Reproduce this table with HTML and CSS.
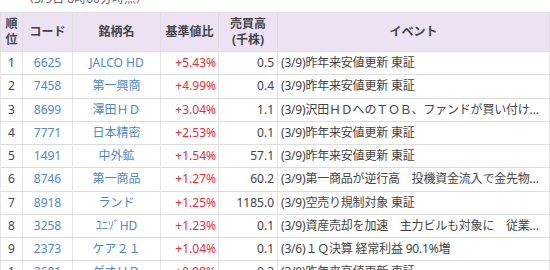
FILE: index.html
```html
<!DOCTYPE html>
<html lang="ja">
<head>
<meta charset="utf-8">
<link rel="stylesheet" href="styles.css">
</head>
<body>
<div class="wrap">
  <p class="note">（3/9日 8時00分時点）</p>
  <table class="rank">
    <colgroup>
      <col class="c-rank"><col class="c-code"><col class="c-name"><col class="c-pct"><col class="c-vol"><col class="c-ev">
    </colgroup>
    <thead>
      <tr>
        <th>順<br>位</th>
        <th>コード</th>
        <th>銘柄名</th>
        <th>基準値比</th>
        <th>売買高<br>(千株)</th>
        <th>イベント</th>
      </tr>
    </thead>
    <tbody>
      <tr><td class="r">1</td><td class="code">6625</td><td class="name">JALCO HD</td><td class="pct">+5.43%</td><td class="vol">0.5</td><td class="ev">(3/9)昨年来安値更新 東証</td></tr>
      <tr><td class="r">2</td><td class="code">7458</td><td class="name">第一興商</td><td class="pct">+4.99%</td><td class="vol">0.4</td><td class="ev">(3/9)昨年来安値更新 東証</td></tr>
      <tr><td class="r">3</td><td class="code">8699</td><td class="name">澤田ＨＤ</td><td class="pct">+3.04%</td><td class="vol">1.1</td><td class="ev">(3/9)沢田ＨＤへのＴＯＢ、ファンドが買い付け期間延長へ</td></tr>
      <tr><td class="r">4</td><td class="code">7771</td><td class="name">日本精密</td><td class="pct">+2.53%</td><td class="vol">0.1</td><td class="ev">(3/9)昨年来安値更新 東証</td></tr>
      <tr><td class="r">5</td><td class="code">1491</td><td class="name">中外鉱</td><td class="pct">+1.54%</td><td class="vol">57.1</td><td class="ev">(3/9)昨年来安値更新 東証</td></tr>
      <tr><td class="r">6</td><td class="code">8746</td><td class="name">第一商品</td><td class="pct">+1.27%</td><td class="vol">60.2</td><td class="ev">(3/9)第一商品が逆行高　投機資金流入で金先物の上昇期待</td></tr>
      <tr><td class="r">7</td><td class="code">8918</td><td class="name">ランド</td><td class="pct">+1.25%</td><td class="vol">1185.0</td><td class="ev">(3/9)空売り規制対象 東証</td></tr>
      <tr><td class="r">8</td><td class="code">3258</td><td class="name">ﾕﾆｿﾞHD</td><td class="pct">+1.23%</td><td class="vol">0.1</td><td class="ev">(3/9)資産売却を加速　主力ビルも対象に　従業員による買収も</td></tr>
      <tr><td class="r">9</td><td class="code">2373</td><td class="name">ケア２１</td><td class="pct">+1.04%</td><td class="vol">0.1</td><td class="ev">(3/6)１Ｑ決算 経常利益 90.1%増</td></tr>
      <tr><td class="r">10</td><td class="code">2681</td><td class="name">ゲオＨＤ</td><td class="pct">+0.98%</td><td class="vol">0.3</td><td class="ev">(3/9)昨年来高値更新 東証</td></tr>
    </tbody>
  </table>
</div>
</body>
</html>
```

FILE: styles.css
```css
html, body {
  margin: 0;
  padding: 0;
  background: #fff;
}
body {
  font-family: "Noto Sans", "Noto Sans CJK JP", sans-serif;
  font-size: 12px;
  color: #333;
}
.wrap {
  width: 549px;
}
.note {
  margin: -10px 0 0 22px;
  height: 22px;
  line-height: 18px;
  font-size: 12px;
  color: #666;
}
.rank {
  width: 549px;
  border-collapse: collapse;
  table-layout: fixed;
}
.c-rank { width: 22px; }
.c-code { width: 50px; }
.c-name { width: 88px; }
.c-pct { width: 58px; }
.c-vol { width: 59px; }
.c-ev { width: 272px; }
.rank th {
  background: #ede1f4;
  border: 1px solid #dddddd;
  height: 38px;
  padding: 0;
  font-weight: bold;
  font-size: 12px;
  line-height: 16px;
  color: #444;
  text-align: center;
}
.rank td {
  border-bottom: 1px solid #dddddd;
  border-left: 1px solid #e4e4e4;
  border-right: 1px solid #e4e4e4;
  height: 22.25px;
  padding: 0 4px;
  line-height: 16px;
  white-space: nowrap;
  overflow: hidden;
  text-overflow: ellipsis;
}
.rank td.r {
  text-align: left;
  padding-left: 7px;
  color: #444;
}
.rank td.code {
  text-align: center;
  color: #4f8ac6;
}
.rank td.name {
  text-align: center;
  color: #4f8ac6;
}
.rank td.pct {
  text-align: right;
  padding-right: 2px;
  color: #e8303a;
}
.rank td.vol {
  text-align: right;
  padding-right: 3px;
  color: #444;
}
.rank td.ev {
  text-align: left;
  padding-left: 3px;
  padding-right: 3px;
  color: #444;
  letter-spacing: -0.2px;
}
```
